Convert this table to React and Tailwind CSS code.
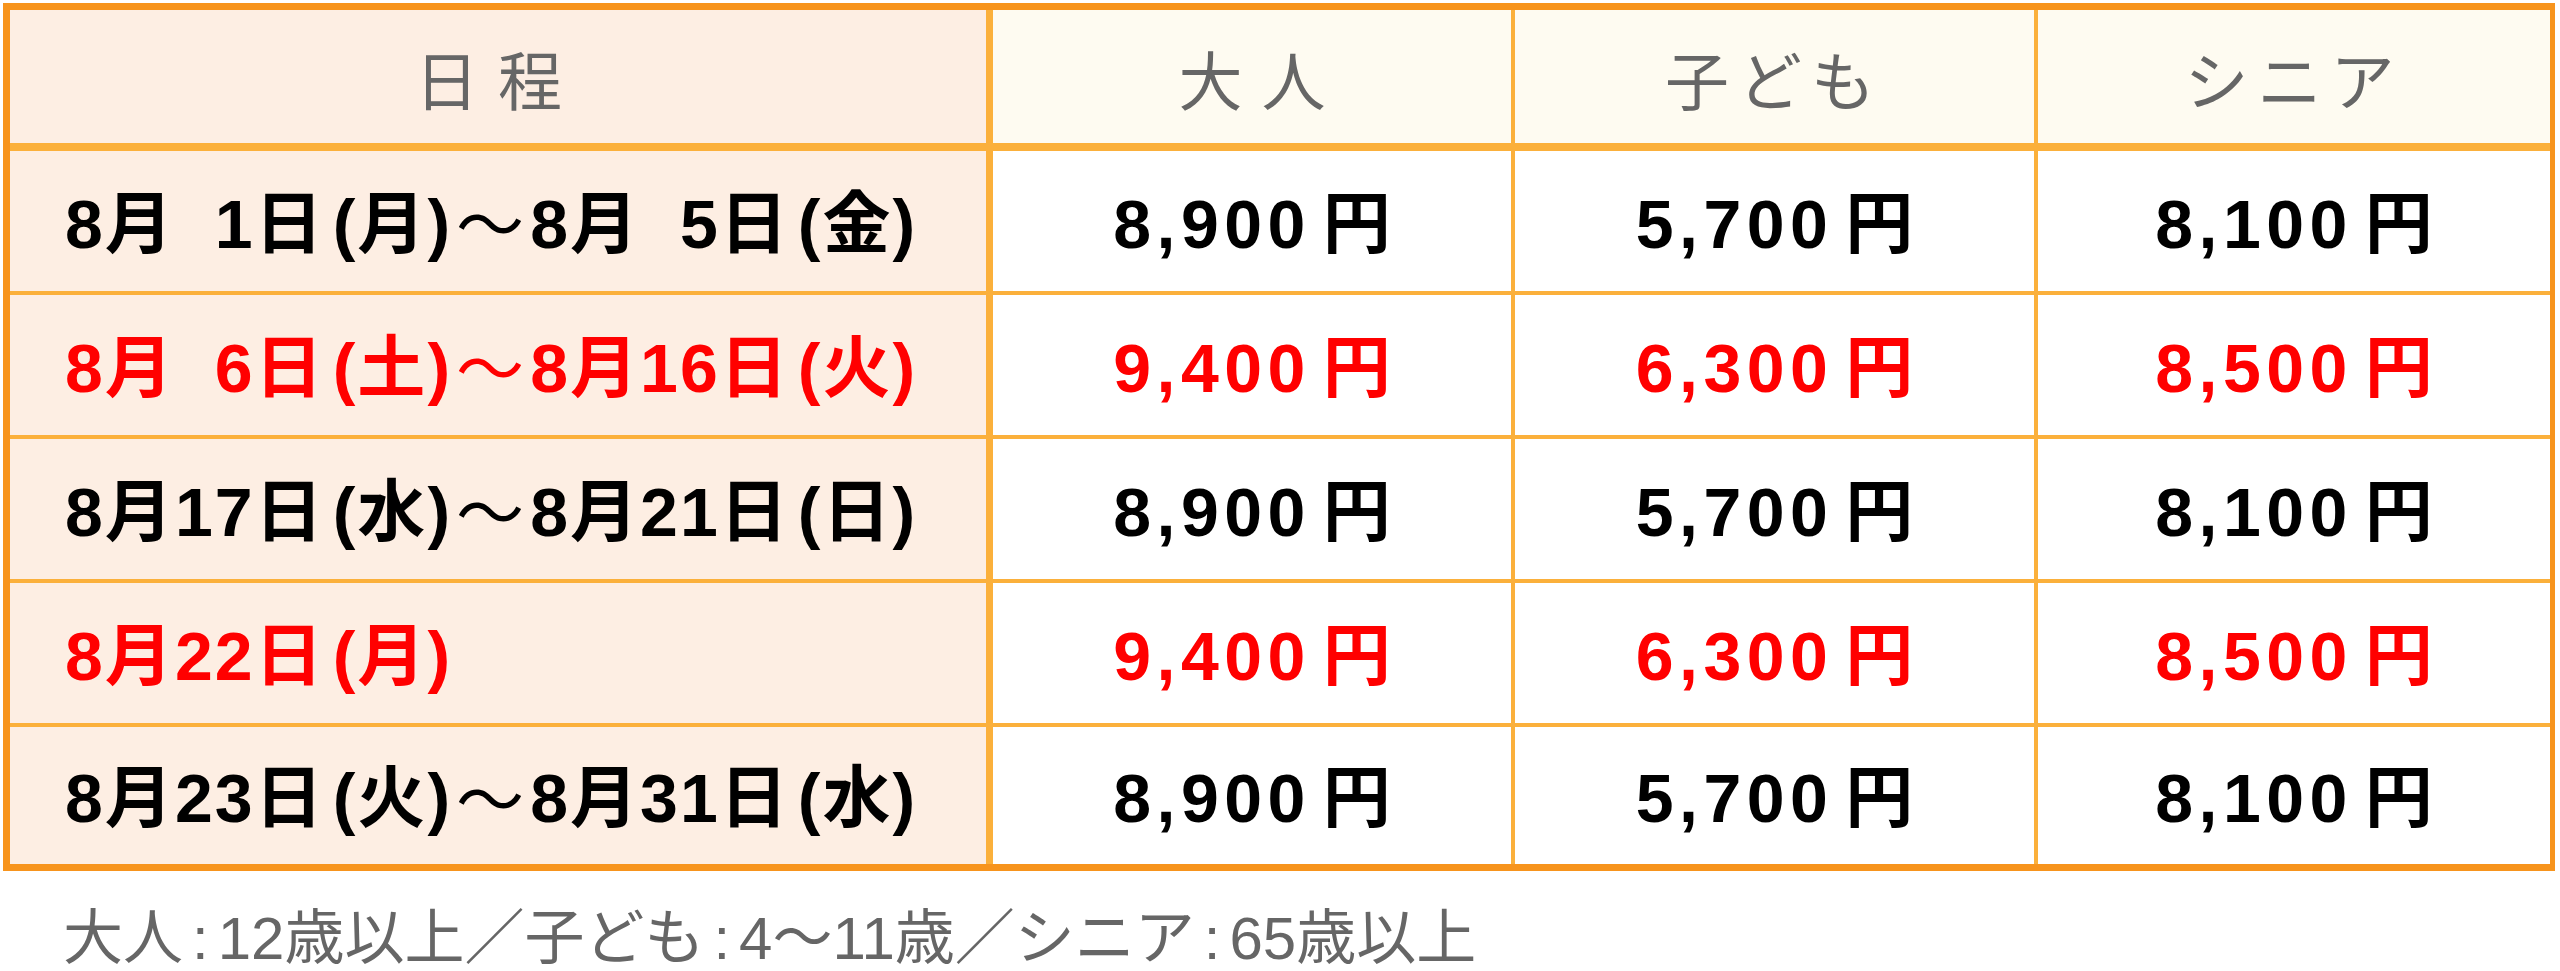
const rows = [
  { red: false, from: [8, 1, "月"], to: [8, 5, "金"], prices: ["8,900", "5,700", "8,100"] },
  { red: true, from: [8, 6, "土"], to: [8, 16, "火"], prices: ["9,400", "6,300", "8,500"] },
  { red: false, from: [8, 17, "水"], to: [8, 21, "日"], prices: ["8,900", "5,700", "8,100"] },
  { red: true, from: [8, 22, "月"], to: null, prices: ["9,400", "6,300", "8,500"] },
  { red: false, from: [8, 23, "火"], to: [8, 31, "水"], prices: ["8,900", "5,700", "8,100"] },
];

const jp = "font-['Noto_Sans_CJK_JP',sans-serif]";

function DatePart({ m, d, w }) {
  return (
    <span>
      {m}
      <span className={jp}>月</span>
      {d < 10 && <span className="invisible">0</span>}
      {d}
      <span className={jp}>日</span>
      <span className="ml-[8px]">(</span>
      <span className={jp}>{w}</span>)
    </span>
  );
}

function Price({ value }) {
  return (
    <span className="tracking-[0.08em]">
      {value}
      <span className={"ml-[12px] tracking-normal " + jp}>円</span>
    </span>
  );
}

function Colon() {
  return <span className="mx-[9px]">:</span>;
}

export default function App() {
  return (
    <div className="bg-white w-[2560px] h-[971px] pt-[3px] pl-[3px] font-['Liberation_Sans','Noto_Sans_CJK_JP',sans-serif]">
      <div className="w-[2552px] border-t-[7px] border-l-[7px] border-b-[7px] border-r-[5px] border-[#f7941d]">
        {/* header */}
        <div className={"flex h-[141px] border-b-[8px] border-[#fbb03b] text-[64px] text-[#666] font-normal " + jp}>
          <div className="w-[983px] shrink-0 bg-[#fdeee3] border-r-[7px] border-[#fbb03b] flex items-center justify-center tracking-[0.3em]">日程</div>
          <div className="w-[522px] shrink-0 bg-[#fefbf1] border-r-[4px] border-[#fbb03b] flex items-center justify-center tracking-[0.3em] pl-[0.3em]">大人</div>
          <div className="w-[523px] shrink-0 bg-[#fefbf1] border-r-[4px] border-[#fbb03b] flex items-center justify-center tracking-[0.14em]">子ども</div>
          <div className="flex-1 bg-[#fefbf1] flex items-center justify-center tracking-[0.14em]">シニア</div>
        </div>
        {rows.map((r, i) => (
          <div
            key={i}
            className={
              "flex font-bold text-[68px] " +
              (r.red ? "text-[#ff0000] " : "text-black ") +
              (i < rows.length - 1 ? "h-[144px] border-b-[4px] border-[#fbb03b]" : "h-[137px]")
            }
          >
            <div className="w-[983px] shrink-0 bg-[#fdeee3] border-r-[7px] border-[#fbb03b] flex items-center pl-[55px] tracking-[0.03em]">
              <DatePart m={r.from[0]} d={r.from[1]} w={r.from[2]} />
              {r.to && (
                <>
                  <span className={"mx-[4px] font-normal " + jp}>～</span>
                  <DatePart m={r.to[0]} d={r.to[1]} w={r.to[2]} />
                </>
              )}
            </div>
            <div className="w-[522px] shrink-0 bg-white border-r-[4px] border-[#fbb03b] flex items-center justify-center">
              <Price value={r.prices[0]} />
            </div>
            <div className="w-[523px] shrink-0 bg-white border-r-[4px] border-[#fbb03b] flex items-center justify-center">
              <Price value={r.prices[1]} />
            </div>
            <div className="flex-1 bg-white flex items-center justify-center">
              <Price value={r.prices[2]} />
            </div>
          </div>
        ))}
      </div>
      <p className="mt-[38px] pl-[60px] text-[60px] leading-none text-[#666]">
        大人<Colon />12歳以上／子ども<Colon />4～11歳／シニア<Colon />65歳以上
      </p>
    </div>
  );
}
